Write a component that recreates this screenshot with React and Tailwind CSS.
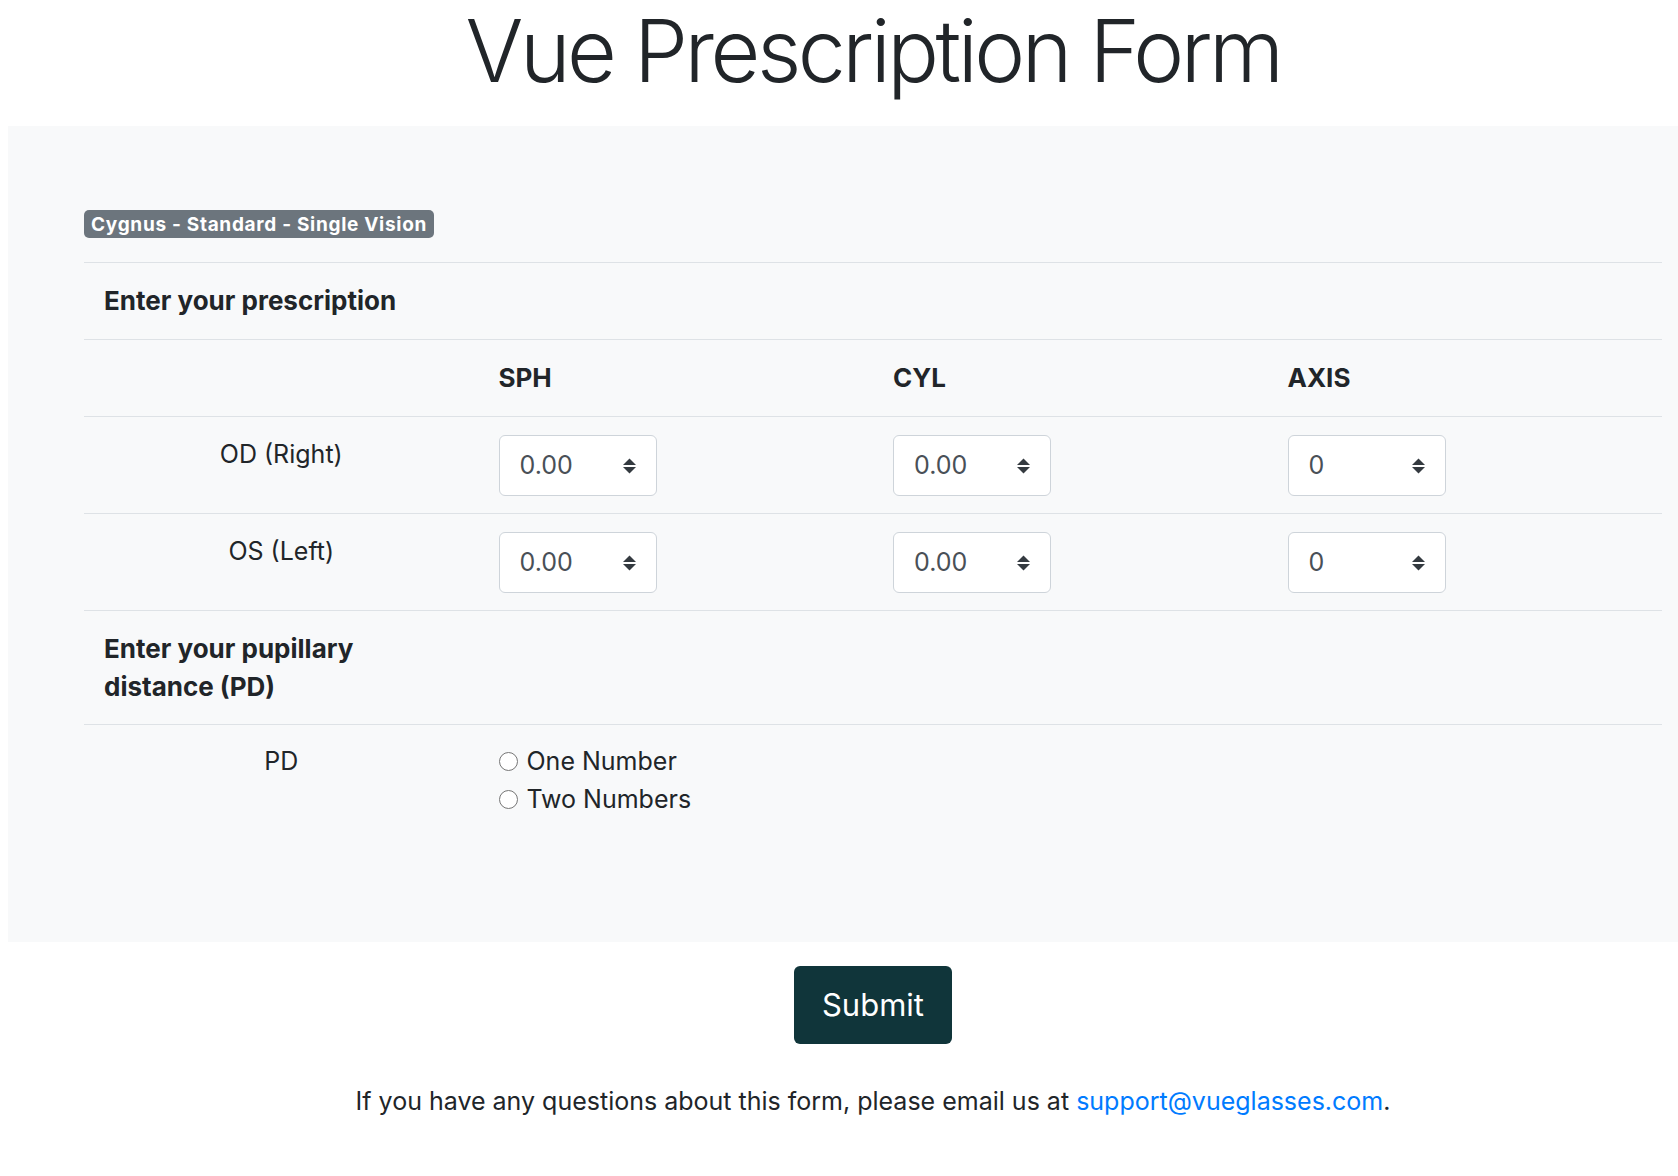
import React from 'react';

// up/down arrows drawn like the native select caret
function Caret() {
  return (
    <svg width="13" height="16" viewBox="0 0 13 16" className="shrink-0">
      <polygon points="0,7 6.5,0.5 13,7" fill="#343a40" />
      <polygon points="0,9 13,9 6.5,15.5" fill="#343a40" />
    </svg>
  );
}

function Select({ value }) {
  return (
    <div className="w-[158px] h-[61px] bg-white border border-[#ced4da] rounded-[6px] flex items-center justify-between pl-[20px] pr-[20px] text-[#495057] text-[25px]">
      <span>{value}</span>
      <Caret />
    </div>
  );
}

function Radio({ label }) {
  return (
    <label className="flex items-center gap-[9px] leading-[38px]">
      <span className="w-[19px] h-[19px] rounded-full border border-[#767676] bg-white" />
      <span>{label}</span>
    </label>
  );
}

const rows = [
  { label: 'OD (Right)', values: ['0.00', '0.00', '0'] },
  { label: 'OS (Left)', values: ['0.00', '0.00', '0'] },
];

export default function App() {
  return (
    <div className="min-h-screen w-full overflow-hidden bg-white text-[#212529] text-[25px]" style={{ fontFamily: 'Inter, "Noto Sans", sans-serif' }}>
      {/* the page is laid out a little wider than the window, like the original */}
      <div className="w-[1746px]">
        <div className="flex justify-center items-start h-[126px]">
          <h1 className="text-[86px] font-light leading-[102px] tracking-[-3.5px]">
            Vue Prescription Form
          </h1>
        </div>

        <div className="px-[8px]">
          <div className="bg-[#f8f9fa] h-[816px] pt-[84px] px-[76px]">
            <div className="flex">
              <span className="bg-[#6c757d] text-white font-bold text-[19px] tracking-[0.7px] leading-[19px] px-[7px] py-[4.5px] rounded-[5px]">
                Cygnus - Standard - Single Vision
              </span>
            </div>

            <div className="mt-[24px]">
              <div className="grid grid-cols-4 border-t border-[#dee2e6]">
                <div className="px-[20px] py-[19px] leading-[38px] font-bold text-[26px]">Enter your prescription</div>
              </div>

              <div className="grid grid-cols-4 border-t border-[#dee2e6] font-bold text-[26px] leading-[38px]">
                <div className="px-[20px] py-[19px]"></div>
                <div className="px-[20px] py-[19px]">SPH</div>
                <div className="px-[20px] py-[19px]">CYL</div>
                <div className="px-[20px] py-[19px]">AXIS</div>
              </div>

              {rows.map(r => (
                <div key={r.label} className="grid grid-cols-4 border-t border-[#dee2e6]">
                  <div className="px-[20px] pt-[18px] text-center leading-[38px]">{r.label}</div>
                  {r.values.map((v, i) => (
                    <div key={i} className="px-[20px] pt-[18px] pb-[17px]">
                      <Select value={v} />
                    </div>
                  ))}
                </div>
              ))}

              <div className="grid grid-cols-4 border-t border-[#dee2e6]">
                <div className="px-[20px] pt-[19px] pb-[18px] leading-[38px] font-bold text-[26px]">
                  Enter your pupillary<br />distance (PD)
                </div>
              </div>

              <div className="grid grid-cols-4 border-t border-[#dee2e6]">
                <div className="px-[20px] pt-[17px] pb-[19px] text-center leading-[38px]">PD</div>
                <div className="px-[20px] pt-[17px] pb-[19px]">
                  <Radio label="One Number" />
                  <Radio label="Two Numbers" />
                </div>
              </div>
            </div>
          </div>
        </div>

        <div className="flex justify-center mt-[24px]">
          <button className="bg-[#10353a] text-white text-[31px] leading-[48px] px-[28px] py-[15px] rounded-[6px]">
            Submit
          </button>
        </div>

        <div className="flex justify-center mt-[38px]">
          <p className="leading-[38px]">
            If you have any questions about this form, please email us at{' '}
            <a href="#" className="text-[#007bff]">support@vueglasses.com</a>.
          </p>
        </div>
      </div>
    </div>
  );
}
